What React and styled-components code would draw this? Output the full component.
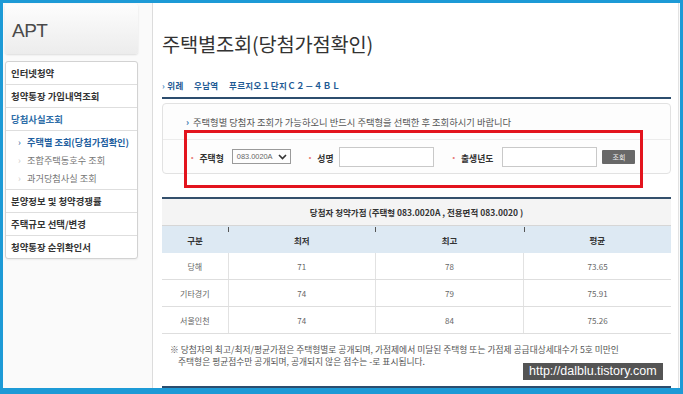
import React from "react";
import styled, { createGlobalStyle } from "styled-components";

const GlobalStyle = createGlobalStyle`
	html, body {
		margin: 0;
		padding: 0;
		background: #ffffff;
	}
	body {
		font-family: "Noto Sans CJK KR", "Noto Sans", sans-serif;
		color: #333;
	}
`;

const Frame = styled.div`
	box-sizing: border-box;
	width: 683px;
	height: 394px;
	border: 3px solid #1d9ad6;
	border-bottom-width: 6px;
	background: #fafafa;
	display: flex;
	overflow: hidden;
`;

const Side = styled.aside`
	width: 133px;
	margin: 1px 0 0 2px;
	display: flex;
	flex-direction: column;
`;

const Logo = styled.div`
	height: 50px;
	box-sizing: border-box;
	padding: 4px 0 0 7px;
	display: flex;
	align-items: center;
	border-radius: 3px;
	background: linear-gradient(#fdfdfd, #ececec);
	box-shadow: 0 1px 2px rgba(0, 0, 0, 0.12);
	font-family: "Liberation Sans", Arial, sans-serif;
	font-size: 19px;
	color: #4a4a4a;
	letter-spacing: -0.5px;
`;

const Menu = styled.ul`
	list-style: none;
	margin: 7px 0 0;
	padding: 0;
	background: #fff;
	border: 1px solid #d2d2d2;
	border-radius: 3px;
	box-shadow: 0 1px 2px rgba(0, 0, 0, 0.06);
`;

const MenuItem = styled.li`
	height: 22px;
	line-height: 22px;
	padding-left: 5px;
	border-bottom: ${(p) => (p.last ? "none" : "1px solid #dedede")};
	font-size: 9.4px;
	font-weight: 700;
	color: ${(p) => (p.active ? "#2f6ea8" : "#333")};
	white-space: nowrap;
`;

const SubList = styled.ul`
	list-style: none;
	margin: 0;
	padding: 2px 0;
	border-bottom: 1px solid #dedede;
`;

const SubItem = styled.li`
	height: 18px;
	line-height: 18px;
	padding-left: 12px;
	font-size: 9.2px;
	font-weight: ${(p) => (p.active ? 700 : 400)};
	color: ${(p) => (p.active ? "#1f5fa0" : "#777")};
	white-space: nowrap;

	&::before {
		content: "›";
		display: inline-block;
		width: 9px;
		color: ${(p) => (p.active ? "#1f5fa0" : "#ccc")};
		font-weight: 400;
	}
`;

const Main = styled.main`
	position: relative;
	flex: 1;
	margin: 0 1px 0 14px;
	padding: 28px 7px 0 9px;
	background: #fff;
	border-left: 1px solid #dcdcdc;
	border-right: 1px solid #e2e2e2;
	display: flex;
	flex-direction: column;
`;

const Title = styled.h1`
	margin: 0;
	font-size: 19.8px;
	line-height: 26px;
	font-weight: 400;
	color: #333;
	letter-spacing: -0.2px;
`;

const Crumb = styled.div`
	margin-top: 21px;
	padding-bottom: 5px;
	border-bottom: 2px solid #2c4d6e;
	font-size: 8.5px;
	line-height: 14px;
	font-weight: 700;
	color: #1e5a94;
	word-spacing: 8px;
	letter-spacing: 0.4px;

	span {
		color: #4a88c0;
		margin-right: 2px;
	}
`;

const Notice = styled.section`
	position: relative;
	margin-top: 4px;
	height: 79px;
	box-sizing: border-box;
	border: 1px solid #e2e2e2;
	border-radius: 4px;
	background: #fdfdfd;
	display: flex;
	flex-direction: column;
`;

const NoticeText = styled.p`
	margin: 0;
	height: 35px;
	padding-left: 23px;
	display: flex;
	align-items: center;
	font-size: 9.3px;
	color: #555;
	border-bottom: 1px solid #ececec;

	&::before {
		content: "›";
		color: #2f6ea8;
		margin-right: 4px;
		font-weight: 700;
	}
`;

const FormRow = styled.div`
	flex: 1;
	display: flex;
	align-items: center;
	padding-left: 26px;
`;

const Label = styled.label`
	font-size: 8.8px;
	font-weight: 700;
	color: #333;
	margin-right: ${(p) => p.gap}px;
	white-space: nowrap;

	&::before {
		content: "·";
		color: #e8807a;
		margin-right: 4px;
		font-size: 11px;
	}
`;

const Select = styled.div`
	box-sizing: border-box;
	width: 59px;
	height: 15px;
	border: 1px solid #9a9a9a;
	display: flex;
	align-items: center;
	justify-content: space-between;
	padding: 0 3px 0 4px;
	font-family: "Liberation Sans", Arial, sans-serif;
	font-size: 7.4px;
	color: #666;
	margin-right: 16px;
`;

const Input = styled.div`
	box-sizing: border-box;
	width: ${(p) => p.w}px;
	height: 20px;
	border: 1px solid #c9c9c9;
	background: #fff;
	margin-right: ${(p) => p.gap}px;
`;

const Button = styled.button`
	width: 33px;
	height: 14px;
	padding: 0;
	border: 0;
	border-radius: 1px;
	background: #686868;
	color: #eee;
	font-family: "Noto Sans CJK KR", sans-serif;
	font-size: 7px;
	line-height: 14px;
`;

const RedBox = styled.div`
	position: absolute;
	left: 21px;
	top: 26px;
	width: 459px;
	height: 58px;
	box-sizing: border-box;
	border: 3px solid #e3141e;
	pointer-events: none;
`;

const Table = styled.table`
	margin-top: 23px;
	width: 100%;
	border-collapse: collapse;
	table-layout: fixed;
	border-top: 2px solid #34506c;
	font-size: 8px;
	text-align: center;
`;

const Caption = styled.th`
	height: 24px;
	background: #f4f4f4;
	border-bottom: 1px solid #d6d6d6;
	font-size: 8.5px;
	font-weight: 700;
	color: #333;
`;

const Head = styled.th`
	position: relative;
	height: 25px;
	background: #dde9f3;
	font-size: 8.5px;
	font-weight: 700;
	color: #333;

	&:not(:first-child)::before {
		content: "";
		position: absolute;
		left: 0;
		top: 1px;
		width: 1px;
		height: 5px;
		background: #555;
	}
`;

const Cell = styled.td`
	height: 24px;
	border-bottom: 1px solid #dedede;
	color: #666;

	& + & {
		border-left: 1px solid #e2e2e2;
	}
`;

const Note = styled.p`
	margin: 10px 0 0 8px;
	font-size: 8.75px;
	line-height: 12px;
	color: #555;
	text-indent: -8px;
	padding-left: 8px;
`;

const Bottom = styled.div`
	margin-top: 18px;
	border-bottom: 2px solid #2c4d6e;
`;

const Watermark = styled.div`
	position: absolute;
	left: 370px;
	top: 360px;
	padding: 0 6px;
	height: 17px;
	line-height: 17px;
	background: #545454;
	color: #fff;
	font-family: "Liberation Sans", Arial, sans-serif;
	font-size: 12.5px;
`;

const Chevron = () => (
	<svg width="9" height="6" viewBox="0 0 9 6">
		<path d="M1 1l3.5 3.5L8 1" fill="none" stroke="#333" strokeWidth="1.6" />
	</svg>
);

const rows = [
	["당해", "71", "78", "73.65"],
	["기타경기", "74", "79", "75.91"],
	["서울인천", "74", "84", "75.26"],
];

export default function App() {
	return (
		<>
			<GlobalStyle />
			<Frame>
				<Side>
					<Logo>APT</Logo>
					<Menu>
						<MenuItem>인터넷청약</MenuItem>
						<MenuItem>청약통장 가입내역조회</MenuItem>
						<MenuItem active>당첨사실조회</MenuItem>
						<SubList>
							<SubItem active>주택별 조회(당첨가점확인)</SubItem>
							<SubItem>조합주택동호수 조회</SubItem>
							<SubItem>과거당첨사실 조회</SubItem>
						</SubList>
						<MenuItem>분양정보 및 청약경쟁률</MenuItem>
						<MenuItem>주택규모 선택/변경</MenuItem>
						<MenuItem last>청약통장 순위확인서</MenuItem>
					</Menu>
				</Side>
				<Main>
					<Title>주택별조회(당첨가점확인)</Title>
					<Crumb>
						<span>›</span>위례 우남역 푸르지오１단지Ｃ２－４ＢＬ
					</Crumb>
					<Notice>
						<NoticeText>
							주택형별 당첨자 조회가 가능하오니 반드시 주택형을 선택한 후 조회하시기 바랍니다
						</NoticeText>
						<FormRow>
							<Label gap={8}>주택형</Label>
							<Select>
								083.0020A <Chevron />
							</Select>
							<Label gap={5}>성명</Label>
							<Input w={95} gap={17} />
							<Label gap={9}>출생년도</Label>
							<Input w={95} gap={5} />
							<Button>조회</Button>
						</FormRow>
						<RedBox />
					</Notice>
					<Table>
						<colgroup>
							<col style={{ width: 66 }} />
							<col style={{ width: 147 }} />
							<col style={{ width: 148 }} />
							<col style={{ width: 147 }} />
						</colgroup>
						<thead>
							<tr>
								<Caption colSpan={4}>
									당첨자 청약가점 (주택형 083.0020A , 전용면적 083.0020 )
								</Caption>
							</tr>
							<tr>
								<Head>구분</Head>
								<Head>최저</Head>
								<Head>최고</Head>
								<Head>평균</Head>
							</tr>
						</thead>
						<tbody>
							{rows.map((r) => (
								<tr key={r[0]}>
									{r.map((c, i) => (
										<Cell key={i}>{c}</Cell>
									))}
								</tr>
							))}
						</tbody>
					</Table>
					<Note>
						※ 당첨자의 최고/최저/평균가점은 주택형별로 공개되며, 가점제에서 미달된 주택형 또는 가점제 공급대상세대수가 5호 미만인
						<br />
						주택형은 평균점수만 공개되며, 공개되지 않은 점수는 -로 표시됩니다.
					</Note>
					<Bottom />
					<Watermark>http://dalblu.tistory.com</Watermark>
				</Main>
			</Frame>
		</>
	);
}
